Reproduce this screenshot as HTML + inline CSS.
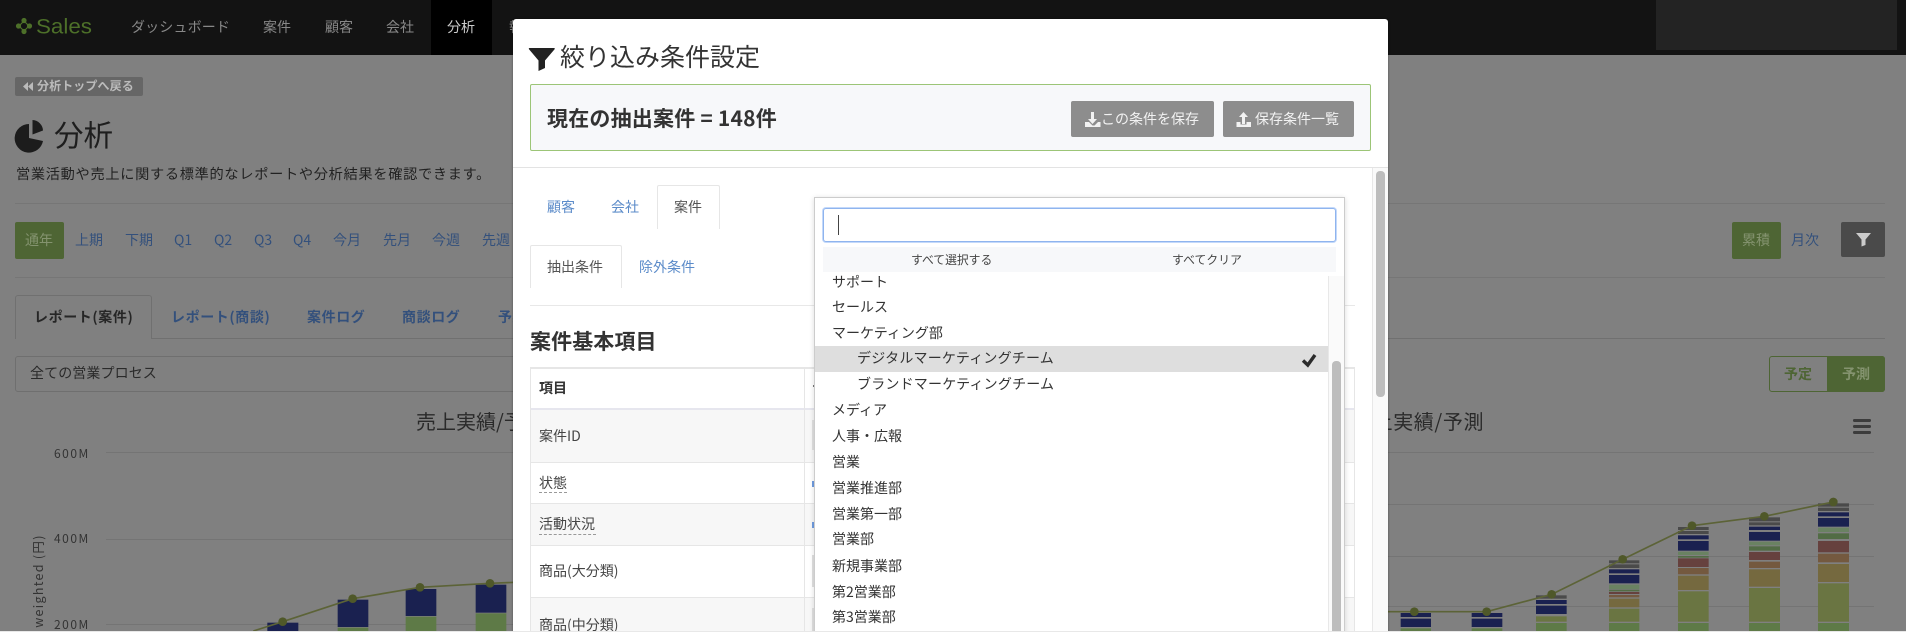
<!DOCTYPE html>
<html lang="ja"><head><meta charset="utf-8"><title>分析</title>
<style>
html,body{margin:0;padding:0;width:1906px;height:632px;overflow:hidden;background:#808080}
body{font-family:"Noto Sans CJK JP","Liberation Sans",sans-serif;font-size:14px;color:#222;position:relative}
#w{position:absolute;left:0;top:0;width:1906px;height:632px;overflow:hidden;filter:blur(.35px)}
.t{position:absolute;white-space:nowrap;line-height:20px;height:20px}
.b{position:absolute;box-sizing:border-box}
.n{color:#888}
.l{color:#33507c}
.m{color:#5b8bc9}
.bd{font-weight:700}
svg{position:absolute;left:0;top:0}
.r{color:#333;left:832px}
</style></head><body><div id="w">

<!-- page behind -->
<div class="b" style="left:0;top:0;width:1906px;height:55px;background:#131313"></div>
<div class="b" style="left:431px;top:0;width:61px;height:55px;background:#000"></div>
<div class="b" style="left:1656px;top:0;width:241px;height:50px;background:#232323"></div>
<div class="t n" style="left:131px;top:17px;font-size:14px;letter-spacing:.15px">ダッシュボード</div>
<div class="t n" style="left:263px;top:17px">案件</div>
<div class="t n" style="left:325px;top:17px">顧客</div>
<div class="t n" style="left:386px;top:17px">会社</div>
<div class="t" style="left:447px;top:17px;color:#ccc">分析</div>
<div class="t n" style="left:509px;top:17px">報告</div>

<div class="b" style="left:15px;top:77px;width:128px;height:19px;background:#666;border-radius:2px"></div>
<div class="t bd" style="left:37px;top:76px;font-size:12px;color:#bbb;letter-spacing:.1px">分析トップへ戻る</div>

<div class="t" style="left:54px;top:119px;font-size:29.5px;line-height:30px;height:30px;color:#1e1e1e">分析</div>
<div class="t" style="left:16px;top:164px;font-size:14.2px;letter-spacing:.7px;color:#222">営業活動や売上に関する標準的なレポートや分析結果を確認できます。</div>

<div class="b" style="left:15px;top:203px;width:1870px;height:1px;background:#767676"></div>
<div class="b" style="left:15px;top:277px;width:1870px;height:1px;background:#767676"></div>

<div class="b" style="left:15px;top:222px;width:49px;height:37px;background:#4e6534;border-radius:2px"></div>
<div class="t" style="left:25px;top:230px;color:#84936f">通年</div>
<div class="t l" style="left:75px;top:230px">上期</div>
<div class="t l" style="left:125px;top:230px">下期</div>
<div class="t l" style="left:174px;top:230px">Q1</div>
<div class="t l" style="left:214px;top:230px">Q2</div>
<div class="t l" style="left:254px;top:230px">Q3</div>
<div class="t l" style="left:293px;top:230px">Q4</div>
<div class="t l" style="left:333px;top:230px">今月</div>
<div class="t l" style="left:383px;top:230px">先月</div>
<div class="t l" style="left:432px;top:230px">今週</div>
<div class="t l" style="left:482px;top:230px">先週</div>

<div class="b" style="left:1732px;top:222px;width:49px;height:37px;background:#4e6534;border-radius:2px"></div>
<div class="t" style="left:1742px;top:230px;color:#84936f">累積</div>
<div class="t l" style="left:1791px;top:230px">月次</div>
<div class="b" style="left:1841px;top:222px;width:44px;height:35px;background:#4a4a4a;border-radius:2px"></div>

<!-- page tabs -->
<div class="b" style="left:15px;top:338px;width:1870px;height:1px;background:#707070"></div>
<div class="b" style="left:15px;top:295px;width:137px;height:44px;background:#808080;border:1px solid #707070;border-bottom:0;border-radius:3px 3px 0 0"></div>
<div class="t bd" style="left:34px;top:307px;color:#262626;letter-spacing:.6px">レポート(案件)</div>
<div class="t bd l" style="left:171px;top:307px;letter-spacing:.6px">レポート(商談)</div>
<div class="t bd l" style="left:307px;top:307px;letter-spacing:.6px">案件ログ</div>
<div class="t bd l" style="left:402px;top:307px;letter-spacing:.6px">商談ログ</div>
<div class="t bd l" style="left:498px;top:307px">予実</div>

<div class="b" style="left:15px;top:356px;width:600px;height:36px;border:1px solid #6f6f6f;border-radius:3px"></div>
<div class="t" style="left:30px;top:363px;color:#2a2a2a;letter-spacing:.1px">全ての営業プロセス</div>

<div class="b" style="left:1769px;top:356px;width:116px;height:36px;border:1px solid #4e6534;border-radius:3px"></div>
<div class="b" style="left:1827px;top:356px;width:58px;height:36px;background:#4e6534;border-radius:0 3px 3px 0"></div>
<div class="t" style="left:1784px;top:364px;color:#4e6534;font-weight:700">予定</div>
<div class="t" style="left:1842px;top:364px;color:#84936f;font-weight:700">予測</div>

<div class="t" style="left:416px;top:406px;font-size:20px;line-height:30px;height:30px;color:#2a2a2a">売上実績/予測</div>
<div class="t" style="left:1352px;top:406px;font-size:20px;line-height:30px;height:30px;color:#2a2a2a;letter-spacing:.6px">売上実績/予測</div>

<div class="t" style="left:54px;top:444px;font-size:12px;color:#333;letter-spacing:1.5px">600M</div>
<div class="t" style="left:54px;top:529px;font-size:12px;color:#333;letter-spacing:1.5px">400M</div>
<div class="t" style="left:54px;top:615px;font-size:12px;color:#333;letter-spacing:1.5px">200M</div>
<div class="t" style="left:-12px;top:571px;width:100px;text-align:center;font-size:12.5px;color:#333;letter-spacing:1.3px;transform:rotate(-90deg)">weighted (円)</div>

<svg width="1906" height="632" viewBox="0 0 1906 632">
 <!-- logo -->
 <path d="M24 21L29 26L24 31L19 26Z" fill="none" stroke="#4d7029" stroke-width="1.200"/>
 <g fill="#4d7029"><circle cx="24" cy="20.500" r="2.600"/><circle cx="18.500" cy="26" r="2.600"/><circle cx="29.500" cy="26" r="2.600"/><circle cx="24" cy="31.500" r="2.600"/></g>
 <text x="36" y="33.500" font-family="Liberation Sans" font-size="21" fill="#4d7029" textLength="56" lengthAdjust="spacingAndGlyphs">Sales</text>
 <!-- back arrows -->
 <path d="M28 82v9l-5-4.500zM33 82v9l-5-4.500z" fill="#bbb"/>
 <!-- pie -->
 <path d="M29 124V138L43 141A14.300 14.300 0 1 1 29 124Z" fill="#1c1c1c"/>
 <path d="M32.500 120A11 11 0 0 1 43 130.500L32.500 134.500Z" fill="#1c1c1c"/>
 <!-- filter btn -->
 <path d="M1856 233h15l-5.500 6.500v5.500l-4 1.500v-7z" fill="#ccc"/>
 <!-- hamburger -->
 <g fill="#3c3c3c"><rect x="1853" y="419" width="18" height="3" rx="1.200"/><rect x="1853" y="425" width="18" height="3" rx="1.200"/><rect x="1853" y="431" width="18" height="3" rx="1.200"/></g>
 <!-- gridlines -->
 <g fill="#747474">
  <rect x="106" y="452" width="410" height="1"/><rect x="106" y="539" width="410" height="1"/><rect x="106" y="624" width="410" height="1"/>
  <rect x="1388" y="452" width="486" height="1"/><rect x="1388" y="504" width="486" height="1"/><rect x="1388" y="556" width="486" height="1"/><rect x="1388" y="606" width="486" height="1"/>
 </g>
 <!-- left bars -->
 <g transform="translate(0 300) scale(.33333)">
  <rect x="802" y="968" width="93" height="26" fill="#1a2150"/>
  <rect x="1013" y="899" width="92" height="82" fill="#1a2150"/><rect x="1013" y="983" width="92" height="12" fill="#5e7a47"/>
  <rect x="1217" y="867" width="92" height="81" fill="#1a2150"/><rect x="1217" y="950" width="92" height="45" fill="#5e7a47"/>
  <rect x="1427" y="854" width="92" height="84" fill="#1a2150"/><rect x="1427" y="940" width="92" height="55" fill="#5e7a47"/>
  <path d="M760 993L848 965L1058 896L1260 862L1470 850L1545 847" fill="none" stroke="#5c6337" stroke-width="5"/>
  <g fill="#4f5829"><circle cx="848" cy="965" r="13"/><circle cx="1058" cy="896" r="13"/><circle cx="1260" cy="862" r="13"/><circle cx="1470" cy="850" r="13"/></g>
 </g>
 <!-- right bars -->
 <g transform="translate(1400 380) scale(.33333)">
  <!-- bar1 -->
  <rect x="2" y="699" width="91" height="12" fill="#1a2150"/><rect x="2" y="716" width="91" height="25" fill="#1a2150"/><rect x="2" y="745" width="91" height="9" fill="#5e7a47"/>
  <!-- bar2 -->
  <rect x="215" y="699" width="92" height="12" fill="#1a2150"/><rect x="215" y="716" width="92" height="25" fill="#1a2150"/><rect x="215" y="745" width="92" height="9" fill="#5e7a47"/>
  <!-- bar3 -->
  <rect x="408" y="646" width="92" height="10" fill="#4a4a4a"/><rect x="408" y="660" width="92" height="12" fill="#1a2150"/><rect x="408" y="677" width="92" height="25" fill="#1a2150"/><rect x="408" y="709" width="92" height="16" fill="#6a7542"/><rect x="408" y="729" width="92" height="25" fill="#5e7a47"/>
  <!-- bar4 -->
  <g transform="translate(627 0)">
   <rect y="541" width="91" height="9" fill="#4a4a4a"/><rect y="553" width="91" height="11" fill="#4a4a4a"/><rect y="568" width="91" height="12" fill="#1a2150"/><rect y="585" width="91" height="25" fill="#1a2150"/><rect y="614" width="91" height="13" fill="#6a8262"/><rect y="629" width="91" height="5" fill="#526c45"/><rect y="636" width="91" height="6" fill="#66413e"/><rect y="645" width="91" height="7" fill="#74593f"/><rect y="656" width="91" height="26" fill="#75693f"/><rect y="686" width="91" height="39" fill="#6a7542"/><rect y="729" width="91" height="25" fill="#5e7a47"/>
  </g>
  <!-- bar5 -->
  <g transform="translate(834 0)">
   <rect y="441" width="92" height="9" fill="#4a4a4a"/><rect y="453" width="92" height="9" fill="#4a4a4a"/><rect y="466" width="92" height="12" fill="#1a2150"/><rect y="483" width="92" height="29" fill="#1a2150"/><rect y="515" width="92" height="10" fill="#6a8262"/><rect y="528" width="92" height="5" fill="#526c45"/><rect y="535" width="92" height="26" fill="#66413e"/><rect y="564" width="92" height="19" fill="#74593f"/><rect y="587" width="92" height="43" fill="#75693f"/><rect y="634" width="92" height="91" fill="#6a7542"/><rect y="729" width="92" height="25" fill="#5e7a47"/>
  </g>
  <!-- bar6 -->
  <g transform="translate(1047 0)">
   <rect y="412" width="93" height="12" fill="#4a4a4a"/><rect y="427" width="93" height="9" fill="#4a4a4a"/><rect y="440" width="93" height="10" fill="#1a2150"/><rect y="456" width="93" height="26" fill="#1a2150"/><rect y="485" width="93" height="11" fill="#6a8262"/><rect y="499" width="93" height="13" fill="#526c45"/><rect y="516" width="93" height="24" fill="#66413e"/><rect y="545" width="93" height="19" fill="#74593f"/><rect y="568" width="93" height="52" fill="#75693f"/><rect y="624" width="93" height="101" fill="#6a7542"/><rect y="729" width="93" height="25" fill="#5e7a47"/>
  </g>
  <!-- bar7 -->
  <g transform="translate(1254 0)">
   <rect y="370" width="93" height="10" fill="#4a4a4a"/><rect y="383" width="93" height="10" fill="#4a4a4a"/><rect y="397" width="93" height="12" fill="#1a2150"/><rect y="414" width="93" height="26" fill="#1a2150"/><rect y="443" width="93" height="13" fill="#6a8262"/><rect y="460" width="93" height="17" fill="#526c45"/><rect y="483" width="93" height="34" fill="#66413e"/><rect y="521" width="93" height="26" fill="#74593f"/><rect y="552" width="93" height="54" fill="#75693f"/><rect y="610" width="93" height="115" fill="#6a7542"/><rect y="729" width="93" height="25" fill="#5e7a47"/>
  </g>
  <path d="M-60 695L43 695L260 695L455 643L668 538L876 437L1093 409L1300 366" fill="none" stroke="#5c6337" stroke-width="5"/>
  <g fill="#4f5829"><circle cx="43" cy="695" r="13"/><circle cx="260" cy="695" r="13"/><circle cx="455" cy="643" r="13"/><circle cx="668" cy="538" r="13"/><circle cx="876" cy="437" r="13"/><circle cx="1093" cy="409" r="13"/><circle cx="1300" cy="366" r="13"/></g>
 </g>
</svg>

<!-- modal -->
<div class="b" style="left:513px;top:19px;width:875px;height:620px;background:#fff;border-radius:3px 3px 0 0;box-shadow:0 0 2px rgba(0,0,0,.4)"></div>
<div class="t" style="left:560px;top:41px;font-size:25px;line-height:30px;height:30px;color:#333">絞り込み条件設定</div>
<div class="b" style="left:530px;top:84px;width:841px;height:67px;background:#f7f8fa;border:1px solid #9cc577;border-radius:2px"></div>
<div class="t bd" style="left:547px;top:108px;font-size:21px;color:#333;letter-spacing:.2px">現在の抽出案件 = 148件</div>
<div class="b" style="left:1071px;top:101px;width:143px;height:36px;background:#8d8d8d;border-radius:2px"></div>
<div class="b" style="left:1223px;top:101px;width:131px;height:36px;background:#8d8d8d;border-radius:2px"></div>
<div class="t" style="left:1101px;top:109px;color:#f2f2f2">この条件を保存</div>
<div class="t" style="left:1255px;top:109px;color:#f2f2f2">保存条件一覧</div>
<div class="b" style="left:513px;top:167px;width:875px;height:1px;background:#e3e3e3"></div>

<!-- modal tabs -->
<div class="t m" style="left:547px;top:197px">顧客</div>
<div class="t m" style="left:611px;top:197px">会社</div>
<div class="b" style="left:657px;top:185px;width:63px;height:44px;border:1px solid #e6e6e6;border-bottom:0;border-radius:2px 2px 0 0"></div>
<div class="t" style="left:674px;top:197px;color:#555">案件</div>
<div class="b" style="left:530px;top:245px;width:92px;height:43px;border:1px solid #e6e6e6;border-bottom:0;border-radius:2px 2px 0 0"></div>
<div class="t" style="left:547px;top:257px;color:#555">抽出条件</div>
<div class="t m" style="left:639px;top:257px">除外条件</div>
<div class="b" style="left:530px;top:305px;width:825px;height:1px;background:#e8e8e8"></div>

<div class="t bd" style="left:530px;top:331px;font-size:21px;color:#333;letter-spacing:.1px">案件基本項目</div>

<!-- table -->
<div class="b" style="left:530px;top:367px;width:825px;height:265px;border:1px solid #e6e6e6;border-top-width:2px;border-bottom:0"></div>
<div class="b" style="left:531px;top:410px;width:823px;height:52px;background:#f7f7f7"></div>
<div class="b" style="left:531px;top:503px;width:823px;height:42px;background:#f7f7f7"></div>
<div class="b" style="left:531px;top:597px;width:823px;height:35px;background:#f7f7f7"></div>
<div class="b" style="left:531px;top:408px;width:823px;height:2px;background:#e6e6ee"></div>
<div class="b" style="left:531px;top:462px;width:823px;height:1px;background:#e6e6e6"></div>
<div class="b" style="left:531px;top:503px;width:823px;height:1px;background:#e6e6e6"></div>
<div class="b" style="left:531px;top:545px;width:823px;height:1px;background:#e6e6e6"></div>
<div class="b" style="left:531px;top:597px;width:823px;height:1px;background:#e6e6e6"></div>
<div class="b" style="left:804px;top:368px;width:1px;height:264px;background:#e6e6e6"></div>
<div class="t bd" style="left:539px;top:378px;color:#333">項目</div>
<div class="t" style="left:539px;top:426px;color:#444">案件ID</div>
<div class="t" style="left:539px;top:473px;color:#444">状態</div>
<div class="b" style="left:539px;top:492px;width:28px;height:0;border-top:1px dashed #999"></div>
<div class="t" style="left:539px;top:514px;color:#444">活動状況</div>
<div class="b" style="left:539px;top:534px;width:57px;height:0;border-top:1px dashed #999"></div>
<div class="t" style="left:539px;top:561px;color:#444">商品(大分類)</div>
<div class="t" style="left:539px;top:615px;color:#444">商品(中分類)</div>
<div class="b" style="left:812px;top:481px;width:2px;height:6px;background:#6f9ce0"></div>
<div class="b" style="left:812px;top:522px;width:2px;height:6px;background:#6f9ce0"></div>
<div class="b" style="left:812px;top:420px;width:2px;height:30px;background:#e0e0e0"></div>
<div class="b" style="left:812px;top:555px;width:2px;height:32px;background:#e0e0e0"></div>
<div class="b" style="left:812px;top:608px;width:2px;height:24px;background:#e0e0e0"></div>
<div class="b" style="left:813px;top:385px;width:2px;height:2px;background:#777"></div>

<!-- modal scrollbar -->
<div class="b" style="left:1372px;top:168px;width:16px;height:464px;background:#fafafa;border-left:1px solid #e8e8e8"></div>
<div class="b" style="left:1376px;top:171px;width:9px;height:226px;background:#bdbdbd;border-radius:4px"></div>

<!-- dropdown -->
<div class="b" style="left:814px;top:197px;width:531px;height:440px;background:#fff;border:1px solid #ccc;box-shadow:0 1px 5px rgba(0,0,0,.15)"></div>
<div class="b" style="left:823px;top:208px;width:513px;height:34px;border:1px solid #8fb4ee;box-shadow:0 0 0 1px #c4d9fa;border-radius:3px;background:#fff"></div>
<div class="b" style="left:838px;top:215px;width:1px;height:20px;background:#444"></div>
<div class="b" style="left:823px;top:247px;width:513px;height:25px;background:#f7f8fa"></div>
<div class="t" style="left:911px;top:250px;font-size:11.800px;color:#444">すべて選択する</div>
<div class="t" style="left:1172px;top:250px;font-size:11.800px;color:#444;letter-spacing:.1px">すべてクリア</div>

<div class="b" style="left:815px;top:346px;width:513px;height:26px;background:#dedede"></div>
<div class="t r" style="top:272px">サポート</div>
<div class="t r" style="top:297px">セールス</div>
<div class="t r" style="top:323px">マーケティング部</div>
<div class="t r" style="top:348px;left:857px;letter-spacing:.2px">デジタルマーケティングチーム</div>
<div class="t r" style="top:374px;left:857px;letter-spacing:.2px">ブランドマーケティングチーム</div>
<div class="t r" style="top:400px">メディア</div>
<div class="t r" style="top:426px">人事・広報</div>
<div class="t r" style="top:452px">営業</div>
<div class="t r" style="top:478px">営業推進部</div>
<div class="t r" style="top:504px">営業第一部</div>
<div class="t r" style="top:529px">営業部</div>
<div class="t r" style="top:556px">新規事業部</div>
<div class="t r" style="top:582px">第2営業部</div>
<div class="t r" style="top:607px">第3営業部</div>

<div class="b" style="left:1328px;top:276px;width:16px;height:356px;background:#fafafa;border-left:1px solid #e8e8e8"></div>
<div class="b" style="left:1332px;top:361px;width:9px;height:271px;background:#bdbdbd;border-radius:4px 4px 0 0"></div>

<svg width="1906" height="632" viewBox="0 0 1906 632">
 <path d="M529.500 48h24.500c.8 0 1 .7.6 1.200L545 60.500V68l-6.500 3V60.500L529 49.200c-.4-.5-.2-1.200.5-1.200z" fill="#222"/>
 <!-- download -->
 <g fill="#f2f2f2">
  <path d="M1091 112h3v7h3l-4.500 5-4.500-5h3z"/>
  <path d="M1085 122h4l3.500 3.500h2l3.500-3.500h2.500v5h-15.500z"/>
  <!-- upload -->
  <path d="M1243.500 112l4.500 5h-3v7h-3v-7h-3z"/>
  <path d="M1236.500 122h4v2.500h6v-2.500h4.500v5h-14.500z"/>
 </g>
 <path d="M1303 360.500L1307.800 365L1315 355" fill="none" stroke="#2c2c2c" stroke-width="3.400"/>
</svg>

<div class="b" style="left:0;top:631px;width:1906px;height:1px;background:#e8e8e8"></div>
</div></body></html>
